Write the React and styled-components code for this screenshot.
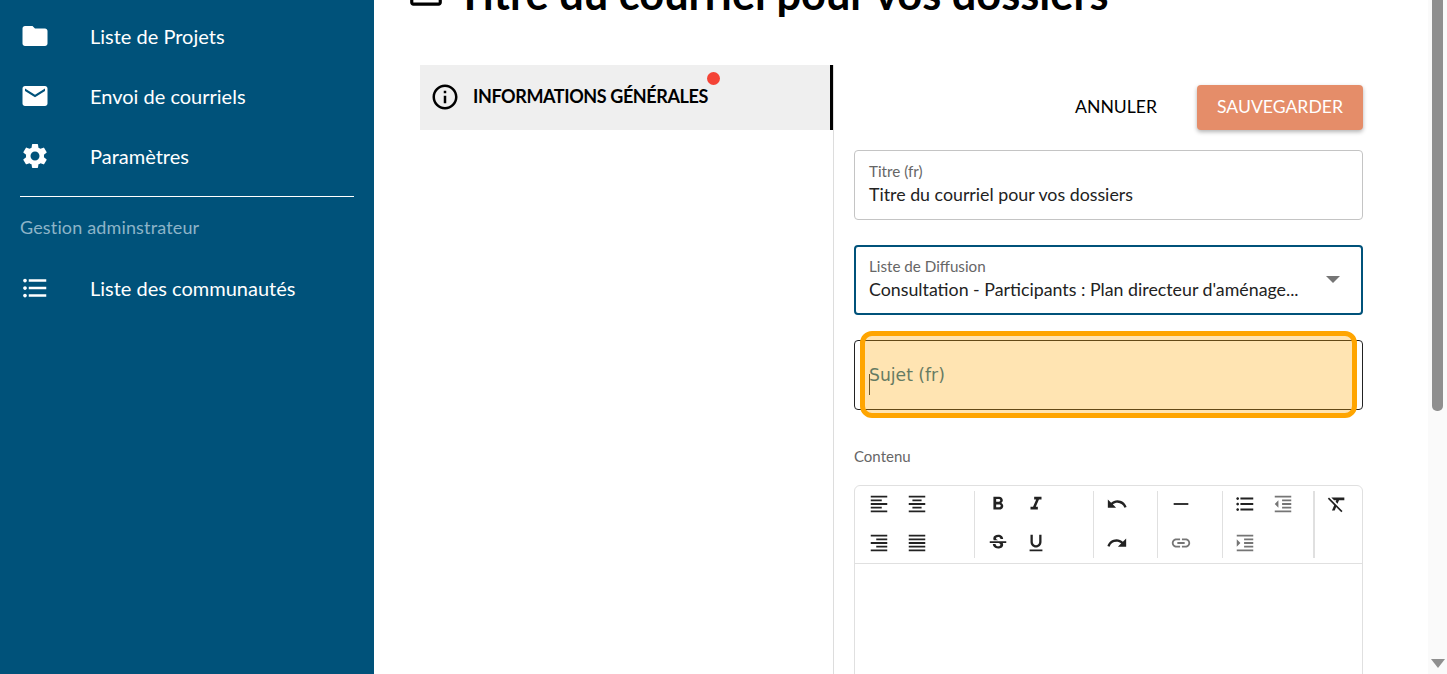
import React from 'react';
import styled, { createGlobalStyle } from 'styled-components';
import {
  MdFolder, MdEmail, MdSettings, MdFormatListBulleted, MdInfoOutline,
  MdFormatAlignLeft, MdFormatAlignCenter, MdFormatAlignRight, MdFormatAlignJustify,
  MdFormatBold, MdFormatItalic, MdStrikethroughS, MdFormatUnderlined,
  MdUndo, MdRedo, MdHorizontalRule, MdLink,
  MdFormatIndentDecrease, MdFormatIndentIncrease, MdFormatClear, MdOutlineEmail,
} from 'react-icons/md';

const GlobalStyle = createGlobalStyle`
  html, body {
    margin: 0;
    height: 100%;
    overflow: hidden;
    background: #fff;
    font-family: "Lato", "Liberation Sans", sans-serif;
  }
`;

const Page = styled.div`
  display: flex;
  height: 100vh;
  overflow: hidden;
`;

const Sidebar = styled.nav`
  width: 374px;
  flex: none;
  background: #00527a;
  color: #fff;
  padding-top: 6px;
  box-sizing: border-box;
`;

const NavItem = styled.div`
  display: flex;
  align-items: center;
  height: 60px;
  padding-left: 20px;
  font-size: 20px;
`;

const NavIcon = styled.span`
  display: flex;
  width: 70px;
  font-size: 30px;
`;

const Divider = styled.hr`
  margin: 10px 20px 0;
  border: 0;
  height: 1px;
  background: #fff;
`;

const SectionLabel = styled.div`
  margin: 18px 20px 19px;
  font-size: 18px;
  line-height: 24px;
  letter-spacing: 0.15px;
  color: #8db4c8;
`;

const Main = styled.main`
  flex: 1;
  min-width: 0;
  overflow: hidden;
`;

const Heading = styled.h1`
  display: flex;
  align-items: center;
  gap: 12px;
  height: 60px;
  margin: -37px 0 42px 33px;
  font-size: 43.35px;
  font-weight: 700;
  color: #000;
  white-space: nowrap;
`;

const Columns = styled.div`
  display: flex;
  margin-left: 46px;
`;

const TabColumn = styled.div`
  width: 413px;
  flex: none;
`;

const Tab = styled.div`
  display: flex;
  align-items: center;
  box-sizing: border-box;
  height: 65px;
  padding: 0 0 1px 10px;
  background: #efefef;
  border-right: 3px solid #000;
  font-size: 18px;
  font-weight: 700;
  letter-spacing: -0.4px;
  color: #000;
`;

const TabIcon = styled.span`
  display: flex;
  width: 43px;
  font-size: 30px;
`;

const TabLabel = styled.span`
  position: relative;
  margin-bottom: 3px;
`;

const Dot = styled.span`
  position: absolute;
  top: -13px;
  right: -12px;
  width: 13px;
  height: 13px;
  border-radius: 50%;
  background: #f44336;
`;

const FormColumn = styled.div`
  width: 509px;
  flex: none;
  border-left: 1px solid #ddd;
  padding: 20px 0 0 20px;
`;

const Actions = styled.div`
  display: flex;
  justify-content: flex-end;
  align-items: center;
  gap: 40px;
  margin-bottom: 20px;
`;

const TextButton = styled.button`
  border: 0;
  background: none;
  padding: 0 0 2px;
  font: 400 17.6px "Lato", sans-serif;
  color: #000;
`;

const SaveButton = styled.button`
  width: 166px;
  height: 45px;
  padding: 0 0 2px;
  border: 0;
  border-radius: 4px;
  background: #e58d69;
  color: #fff;
  font: 400 17.6px "Lato", sans-serif;
  box-shadow: 0 2px 4px rgba(0, 0, 0, 0.3);
`;

const Field = styled.div`
  position: relative;
  display: flex;
  flex-direction: column;
  justify-content: center;
  box-sizing: border-box;
  height: 70px;
  margin-bottom: 25px;
  padding: 0 14px 3px ${p => (p.$focused ? 13 : 14)}px;
  border-radius: 4px;
  border: ${p => (p.$focused ? '2px solid #00527a' : p.$dark ? '1px solid #222' : '1px solid #c4c4c4')};
`;

const FieldLabel = styled.div`
  margin-bottom: 3px;
  font-size: 15.2px;
  line-height: 18px;
  color: #666;
`;

const FieldValue = styled.div`
  font-size: 17.8px;
  line-height: 23px;
  color: #222;
  white-space: nowrap;
`;

const Arrow = styled.span`
  position: absolute;
  right: 21px;
  top: 29px;
  border-left: 7px solid transparent;
  border-right: 7px solid transparent;
  border-top: 7px solid #757575;
`;

const Placeholder = styled.div`
  margin-top: 3px;
  font-family: "DejaVu Sans", sans-serif;
  font-size: 17.2px;
  color: #1f6a90;
`;

const Caret = styled.span`
  position: absolute;
  left: 14px;
  top: 33px;
  width: 1px;
  height: 21px;
  background: #333;
`;

const Highlight = styled.div`
  position: absolute;
  left: 5px;
  top: -10px;
  width: 497px;
  height: 87px;
  box-sizing: border-box;
  border: 5px solid #ffa500;
  border-radius: 12px;
  background: rgba(255, 165, 0, 0.3);
`;

const EditorLabel = styled.div`
  margin: 37px 0 20px;
  font-size: 15px;
  line-height: 18px;
  color: #666;
`;

const Editor = styled.div`
  border: 1px solid #e0e0e0;
  border-radius: 6px;
  height: 300px;
`;

const Toolbar = styled.div`
  display: flex;
  height: 78px;
  border-bottom: 1px solid #e0e0e0;
  padding-top: 5px;
  box-sizing: border-box;
`;

const ToolGroup = styled.div`
  display: grid;
  grid-template-columns: repeat(2, 38px);
  grid-auto-rows: 26px;
  row-gap: 13px;
  align-content: start;
  box-sizing: border-box;
  width: ${p => p.$width}px;
  height: 67px;
  padding-left: ${p => p.$pad}px;
  border-right: ${p => (p.$last ? '0' : p.$thick ? '2px solid #e0e0e0' : '1px solid #e0e0e0')};
`;

const Tool = styled.span`
  display: flex;
  align-items: center;
  justify-content: center;
  font-size: 22px;
  color: ${p => (p.$muted ? '#757575' : '#222')};
`;

const Track = styled.div`
  position: relative;
  width: 19px;
  flex: none;
  background: #fafafa;
`;

const Thumb = styled.div`
  width: 11px;
  height: 411px;
  margin-left: 4px;
  border-radius: 0 0 5px 5px;
  background: #8f8f8f;
`;

const ScrollDown = styled.span`
  position: absolute;
  left: 3px;
  bottom: 6px;
  border-left: 7px solid transparent;
  border-right: 7px solid transparent;
  border-top: 9px solid #8f8f8f;
`;

const navItems = [
  { label: 'Liste de Projets', Icon: MdFolder },
  { label: 'Envoi de courriels', Icon: MdEmail },
  { label: 'Paramètres', Icon: MdSettings },
];

const toolGroups = [
  { width: 120, pad: 5, tools: [[MdFormatAlignLeft], [MdFormatAlignCenter], [MdFormatAlignRight], [MdFormatAlignJustify]] },
  { width: 120, pad: 4, tools: [[MdFormatBold], [MdFormatItalic], [MdStrikethroughS], [MdFormatUnderlined]] },
  { width: 64, pad: 4, tools: [[MdUndo], null, [MdRedo]] },
  { width: 65, pad: 4, tools: [[MdHorizontalRule], null, [MdLink, true]] },
  { width: 92, pad: 3, thick: true, tools: [[MdFormatListBulleted], [MdFormatIndentDecrease, true], [MdFormatIndentIncrease, true]] },
  { width: 47, pad: 3, last: true, tools: [[MdFormatClear]] },
];

export default function App() {
  return (
    <Page>
      <GlobalStyle />
      <Sidebar>
        {navItems.map(({ label, Icon }) => (
          <NavItem key={label}>
            <NavIcon><Icon /></NavIcon>
            {label}
          </NavItem>
        ))}
        <Divider />
        <SectionLabel>Gestion adminstrateur</SectionLabel>
        <NavItem>
          <NavIcon><MdFormatListBulleted /></NavIcon>
          Liste des communautés
        </NavItem>
      </Sidebar>
      <Main>
        <Heading>
          <MdOutlineEmail size={38} />
          Titre du courriel pour vos dossiers
        </Heading>
        <Columns>
          <TabColumn>
            <Tab>
              <TabIcon><MdInfoOutline /></TabIcon>
              <TabLabel>
                INFORMATIONS GÉNÉRALES
                <Dot />
              </TabLabel>
            </Tab>
          </TabColumn>
          <FormColumn>
            <Actions>
              <TextButton>ANNULER</TextButton>
              <SaveButton>SAUVEGARDER</SaveButton>
            </Actions>
            <Field>
              <FieldLabel>Titre (fr)</FieldLabel>
              <FieldValue>Titre du courriel pour vos dossiers</FieldValue>
            </Field>
            <Field $focused>
              <FieldLabel>Liste de Diffusion</FieldLabel>
              <FieldValue>Consultation - Participants : Plan directeur d'aménage...</FieldValue>
              <Arrow />
            </Field>
            <Field $dark>
              <Placeholder>Sujet (fr)</Placeholder>
              <Caret />
              <Highlight />
            </Field>
            <EditorLabel>Contenu</EditorLabel>
            <Editor>
              <Toolbar>
                {toolGroups.map((group, i) => (
                  <ToolGroup key={i} $width={group.width} $pad={group.pad} $last={group.last} $thick={group.thick}>
                    {group.tools.map((tool, j) => (
                      tool
                        ? <Tool key={j} $muted={tool[1]}>{React.createElement(tool[0])}</Tool>
                        : <span key={j} />
                    ))}
                  </ToolGroup>
                ))}
              </Toolbar>
            </Editor>
          </FormColumn>
        </Columns>
      </Main>
      <Track>
        <Thumb />
        <ScrollDown />
      </Track>
    </Page>
  );
}
